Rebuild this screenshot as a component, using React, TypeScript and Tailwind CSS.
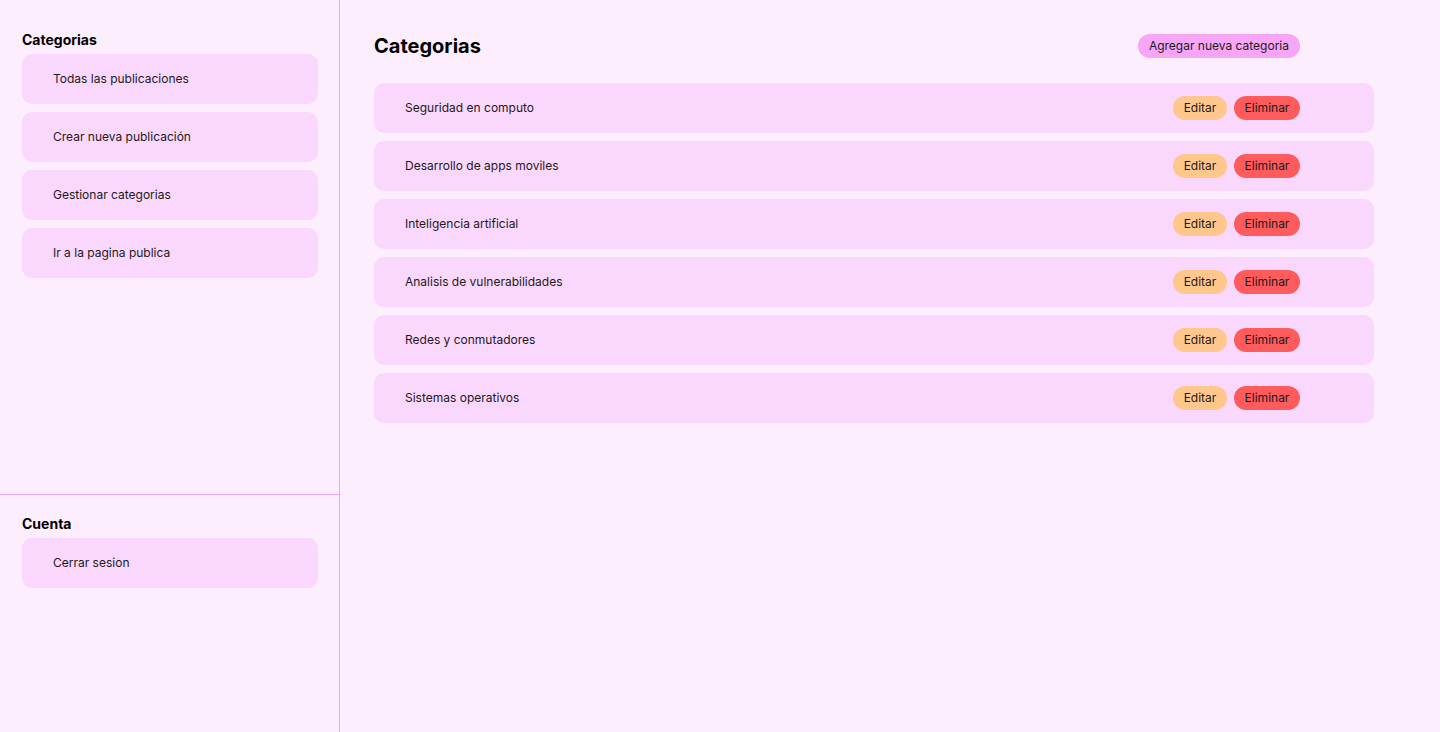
import React from "react";

const navItems = [
  "Todas las publicaciones",
  "Crear nueva publicación",
  "Gestionar categorias",
  "Ir a la pagina publica",
];

const categories = [
  "Seguridad en computo",
  "Desarrollo de apps moviles",
  "Inteligencia artificial",
  "Analisis de vulnerabilidades",
  "Redes y conmutadores",
  "Sistemas operativos",
];

function NavCard({ label }: { label: string }) {
  return (
    <div className="h-[50px] w-[296px] rounded-[10px] bg-[#fad7fd] pl-[31px] flex items-center text-[12px] text-[#1c1a1c]">
      {label}
    </div>
  );
}

export default function App() {
  return (
    <main
      className="flex h-[732px] w-full bg-[#fdeefd] text-black"
      style={{ fontFamily: "Inter, 'Noto Sans', sans-serif" }}
    >
      <aside className="flex h-full w-[340px] shrink-0 flex-col border-r border-[#f3a6f3]">
        <section className="h-[495px] border-b border-[#f3a6f3] pl-[22px] pt-[30px]">
          <h3 className="text-[14px] font-bold leading-5">Categorias</h3>
          <div className="mt-1 flex flex-col gap-2">
            {navItems.map((item) => (
              <NavCard key={item} label={item} />
            ))}
          </div>
        </section>
        <section className="pl-[22px] pt-[19px]">
          <h3 className="text-[14px] font-bold leading-5">Cuenta</h3>
          <div className="mt-1">
            <NavCard label="Cerrar sesion" />
          </div>
        </section>
      </aside>
      <section className="flex-1 pl-[34px] pt-8">
        <div className="flex h-7 w-[926px] items-center justify-between">
          <h1 className="text-[20px] font-bold leading-7">Categorias</h1>
          <button className="h-6 rounded-full bg-[#f7a5f7] px-[11px] text-[12px] text-[#1c1a1c]">
            Agregar nueva categoria
          </button>
        </div>
        <div className="mt-[23px] flex flex-col gap-2">
          {categories.map((cat) => (
            <div
              key={cat}
              className="flex h-[50px] w-[1000px] items-center justify-between rounded-[10px] bg-[#fad7fd] pl-[31px] pr-[74px]"
            >
              <span className="text-[12px] text-[#1c1a1c]">{cat}</span>
              <div className="flex gap-[7px]">
                <button className="h-6 w-[54px] rounded-full bg-[#ffc78b] text-[12px] text-[#1c1a1c]">
                  Editar
                </button>
                <button className="h-6 w-[66px] rounded-full bg-[#fe5b5c] text-[12px] text-[#1c1a1c]">
                  Eliminar
                </button>
              </div>
            </div>
          ))}
        </div>
      </section>
    </main>
  );
}
